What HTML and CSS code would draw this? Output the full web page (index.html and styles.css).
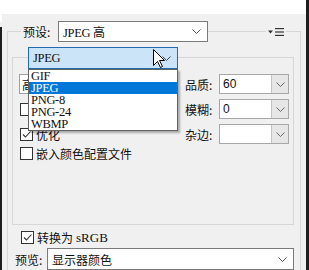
FILE: index.html
```html
<!DOCTYPE html>
<html>
<head>
  <meta charset="utf-8">
  <link rel="stylesheet" href="styles.css">
</head>
<body>
  <div class="window">
    <div class="edge-left"></div>
    <div class="main">
      <div class="topbar"></div>
      <div class="panel">
        <div class="group">
          <div class="group-head">
            <span class="head-label">预设:</span>
            <div class="select preset">
              <span><span class="latin">JPEG</span> 高</span>
              <svg class="chev" width="9" height="5"><path d="M0.5 0.5 L4.5 4.5 L8.5 0.5" stroke="#555" fill="none"/></svg>
            </div>
            <div class="menu-icon">
              <svg width="16" height="8">
                <polygon points="0,2.5 5,2.5 2.5,5.5" fill="#333"/>
                <rect x="7" y="0" width="9" height="1.2" fill="#333"/>
                <rect x="7" y="3.4" width="9" height="1.2" fill="#333"/>
                <rect x="7" y="6.8" width="9" height="1.2" fill="#333"/>
              </svg>
            </div>
          </div>

          <div class="subgroup">
            <div class="sub-head">
              <div class="select format">
                <span class="latin">JPEG</span>
                <svg class="chev" width="9" height="5"><path d="M0.5 0.5 L4.5 4.5 L8.5 0.5" stroke="#444" fill="none"/></svg>
                <div class="dropdown">
                  <div class="dd-item">GIF</div>
                  <div class="dd-item selected">JPEG</div>
                  <div class="dd-item">PNG-8</div>
                  <div class="dd-item">PNG-24</div>
                  <div class="dd-item">WBMP</div>
                </div>
                <svg class="cursor" width="13" height="20">
                  <path d="M0.5 0.5 L0.5 16.5 L4.5 12.5 L7.5 18.5 L9.5 17.5 L6.5 11.5 L11.5 11.5 Z" fill="#fff" stroke="#000"/>
                </svg>
              </div>
            </div>

            <div class="opts">
              <div class="select level">高</div>
              <span class="opt-label">品质:</span>
              <div class="combo">
                <span class="val">60</span>
                <span class="btn"><svg width="9" height="5"><path d="M0.5 0.5 L4.5 4.5 L8.5 0.5" stroke="#666" fill="none"/></svg></span>
              </div>

              <label class="check"><span class="box"></span>连续</label>
              <span class="opt-label">模糊:</span>
              <div class="combo">
                <span class="val">0</span>
                <span class="btn"><svg width="9" height="5"><path d="M0.5 0.5 L4.5 4.5 L8.5 0.5" stroke="#666" fill="none"/></svg></span>
              </div>

              <label class="check"><span class="box checked"><svg width="11" height="11"><path d="M2 5.5 L4.5 8 L9.5 2.5" stroke="#333" stroke-width="1.1" fill="none"/></svg></span>优化</label>
              <span class="opt-label">杂边:</span>
              <div class="combo">
                <span class="val"></span>
                <span class="btn"><svg width="9" height="5"><path d="M0.5 0.5 L4.5 4.5 L8.5 0.5" stroke="#666" fill="none"/></svg></span>
              </div>
            </div>

            <label class="check embed"><span class="box"></span>嵌入颜色配置文件</label>
          </div>

          <label class="check srgb"><span class="box checked"><svg width="11" height="11"><path d="M2 5.5 L4.5 8 L9.5 2.5" stroke="#333" stroke-width="1.1" fill="none"/></svg></span>转换为 <span class="latin wide">sRGB</span></label>

          <div class="preview-row">
            <span class="preview-label">预览:</span>
            <div class="select preview">
              <span>显示器颜色</span>
              <svg class="chev" width="9" height="5"><path d="M0.5 0.5 L4.5 4.5 L8.5 0.5" stroke="#555" fill="none"/></svg>
            </div>
          </div>
        </div>
      </div>
    </div>
    <div class="edge-right"></div>
  </div>
</body>
</html>
```

FILE: styles.css
```css
* {
  box-sizing: border-box;
}
body {
  margin: 0;
  width: 309px;
  height: 270px;
  overflow: hidden;
  font-family: "Noto Sans CJK SC", sans-serif;
  font-size: 12px;
  color: #111;
}
.window {
  display: flex;
  height: 270px;
}
.edge-left {
  width: 2px;
  background: linear-gradient(#fff 0 22px, #f0f0f0 22px 27px, #1e1e1e 27px);
}
.edge-right {
  width: 3px;
  background: #1e1e1e;
}
.main {
  flex: 1;
  display: flex;
  flex-direction: column;
}
.topbar {
  height: 22px;
  background: #fff;
}
.panel {
  flex: 1;
  background: #f0f0f0;
  padding: 17px 5px 0 5px;
}
.latin {
  font-family: "Liberation Serif", serif;
  font-size: 12.5px;
  letter-spacing: -0.3px;
}
.latin.wide {
  font-size: 13px;
  letter-spacing: 0;
}
/* Group boxes */
.group {
  border: 1px solid #d6d6d6;
  border-bottom: none;
  height: 100%;
}
.group-head {
  display: flex;
  align-items: center;
  height: 21px;
  margin-top: -11px;
}
.head-label {
  margin-left: 13px;
  padding-left: 2px;
  width: 37px;
  line-height: 21px;
  background: #f0f0f0;
}
.menu-icon {
  margin-left: auto;
  margin-right: 14px;
  padding: 0 2px;
  height: 10px;
  display: flex;
  align-items: center;
  background: #f0f0f0;
}
.subgroup {
  margin: 15px 6px 0 4px;
  height: 168px;
  border: 1px solid #d6d6d6;
  padding: 0 4px 0 6px;
}
.sub-head {
  display: flex;
  height: 22px;
  margin-top: -11px;
}
/* Selects */
.select {
  display: flex;
  align-items: center;
  justify-content: space-between;
  background: #fff;
  border: 1px solid #7a7a7a;
  padding: 0 6px 0 4px;
}
.preset {
  width: 150px;
  height: 21px;
}
.format {
  position: relative;
  margin-left: 9px;
  width: 150px;
  height: 22px;
  background: #cce4f7;
  border-color: #1f6bb0;
}
.dropdown {
  position: absolute;
  top: 21px;
  left: -1px;
  width: 150px;
  background: #fff;
  border: 1px solid #646464;
  box-shadow: 2px 2px 2px rgba(0, 0, 0, 0.3);
  z-index: 2;
  font-family: "Liberation Serif", serif;
  font-size: 12.5px;
  letter-spacing: -0.3px;
}
.dd-item {
  height: 12px;
  line-height: 12px;
  padding-left: 2px;
}
.dd-item.selected {
  background: #0078d7;
  color: #fff;
}
.cursor {
  position: absolute;
  left: 124px;
  top: 1px;
  z-index: 3;
}
.level {
  width: 120px;
  height: 20px;
  border-color: #a0a0a0;
  padding-left: 2px;
}
/* Options grid */
.opts {
  display: grid;
  grid-template-columns: 166px 34px 70px;
  grid-auto-rows: 20px;
  row-gap: 5px;
  margin-top: 5px;
  align-items: center;
}
.opt-label {
  white-space: nowrap;
}
.combo {
  display: flex;
  height: 20px;
  background: #fff;
  border: 1px solid #a8a8a8;
}
.combo .val {
  flex: 1;
  padding-left: 3px;
  line-height: 18px;
  font-family: "Liberation Sans", sans-serif;
}
.combo .btn {
  width: 17px;
  display: flex;
  align-items: center;
  justify-content: center;
  background: #e6e6e6;
  border-left: 1px solid #c4c4c4;
}
.check {
  display: flex;
  align-items: center;
  gap: 3px;
  padding-left: 1px;
}
.box {
  width: 13px;
  height: 13px;
  border: 1px solid #333;
  background: #fff;
  display: flex;
  align-items: center;
  justify-content: center;
}
.embed {
  margin-top: 3px;
  height: 13px;
}
.srgb {
  margin: 6px 0 0 12px;
  height: 13px;
}
.preview-row {
  display: flex;
  align-items: center;
  margin-top: 4px;
}
.preview-label {
  margin-left: 7px;
  width: 32px;
}
.preview {
  flex: 1;
  height: 22px;
  margin-right: 6px;
}
```
